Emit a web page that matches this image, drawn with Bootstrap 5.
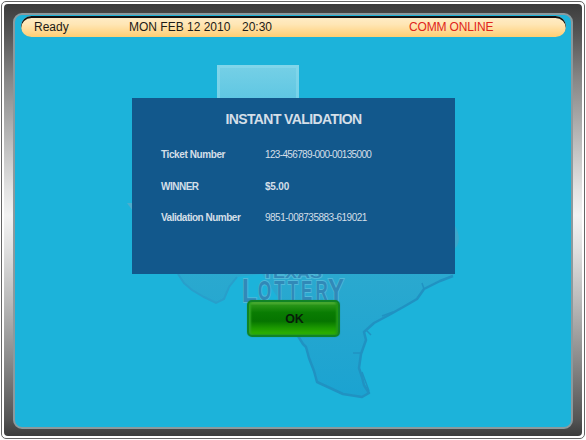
<!DOCTYPE html>
<html lang="en">
<head>
<meta charset="utf-8">
<meta name="viewport" content="width=device-width, initial-scale=1">
<title>Instant Validation</title>
<link href="https://cdn.jsdelivr.net/npm/bootstrap@5.3.0/dist/css/bootstrap.min.css" rel="stylesheet">
<style>
body{width:586px;height:440px;background:#fff;font-family:"Liberation Sans",Arial,sans-serif;line-height:1.15;padding:1px 0 1px 1px}
.shell{width:584px;height:438px;border:1px solid #666;border-radius:5px;background:#fff;padding:2px}
.bezel{height:100%;border-radius:4px;padding:9px;background:linear-gradient(#3c3c3c 0,#565656 7%,#858585 17%,#b5b5b5 30%,#e3e3e3 43%,#f2f2f2 49%,#e2e2e2 56%,#bdbdbd 68%,#8c8c8c 82%,#555 96%,#3c3c3c 100%)}
.screen{height:416px;border:2px solid #8b9a9e;border-radius:9px;background:#1cb3da;isolation:isolate}
.backdrop{left:-15px;top:-15px;z-index:-1}
.status{height:21px;margin:1px 5px 0 6px;border-radius:11px;background:linear-gradient(#ffedc9,#ffe6b5 40%,#ffce73);box-shadow:inset 0 2px 0 #111;font-size:12px;color:#1d1a16}
.status span{padding-top:3px;white-space:pre}
.t-ready{width:95px;margin-left:13px}
.t-date{width:113px}
.t-time{width:167px}
.t-comm{color:#e0251b;letter-spacing:-.15px}
.dialog-box{width:323px;height:176px;margin:61px 0 0 117px;background:#12588c;color:#d4dfe8;padding:13px 29px 0}
.dialog-box h1{font-size:14px;line-height:17px;letter-spacing:-.6px;margin:0 0 18px;font-weight:700}
.line{height:31.5px;font-size:10px;line-height:17px;letter-spacing:-.5px}
.line dt{width:104px}
.line:first-child dt{letter-spacing:-.4px}
.line dd{margin:0}
.line .serial{letter-spacing:-.65px}
.line .prize{letter-spacing:-.2px}
.ok{width:93px;height:37px;margin:26px 0 0 232px;padding:2px 0 0 2px;border:2px solid #118425;border-radius:5px;background:linear-gradient(#65b645 0,#279417 10%,#097c02 32%,#067400 58%,#1b9800 78%,#31b600 100%);color:#071e09;font-size:12.5px;font-weight:700;letter-spacing:-.2px;box-shadow:inset 2px 0 2px #32a523,inset -2px 0 2px #229618,inset 0 -1px 1px #249d16,0 0 1px #16806b}
</style>
</head>
<body class="overflow-hidden">
<main class="shell">
 <div class="bezel">
  <section class="screen position-relative overflow-hidden">
   <svg class="backdrop position-absolute" width="586" height="440" viewBox="0 0 586 440" aria-hidden="true">
    <defs>
     <linearGradient id="pan" x2="0" y2="1"><stop stop-color="#76d0e6"/><stop offset="1" stop-color="#5bc5e2"/></linearGradient>
     <linearGradient id="land" gradientUnits="userSpaceOnUse" x1="0" y1="270" x2="0" y2="395"><stop stop-color="#2ba9cf"/><stop offset="1" stop-color="#1ba3d1"/></linearGradient>
    </defs>
    <path d="M217 65H299V105H217Z" fill="url(#pan)"/>
    <path d="M218.500 104V66.500H297.500V104" fill="none" stroke="#8adbec" stroke-width="3" opacity=".55"/>
    <path d="M127 203L138 218V203Z" fill="#4caece"/>
    <path d="M454 224Q459 232 459 239Q458 247 454 249Z" fill="#3ba8cc"/>
    <path d="M178 272L184 283L192 290L204 297L216 303L224 299L229 287L237 277L262 274L286 310L300 338L306 347L309 358L314 371L317 382L330 388L343 394L362 397L369 393L364 385L362 377L359 368L361 354L366 340L364 332L374 323L389 315L405 306L417 299L424 289L440 281L454 275V265H178Z" fill="url(#land)"/>
    <path d="M178 274L184 283L192 290L204 297L216 303L224 299L229 287L237 277" fill="none" stroke="#289fcb" stroke-width="2"/>
    <path d="M298 336L303 344L306 347L309 358L314 371L317 382L330 388L343 394L362 397L369 393L364 385L362 377L359 368L361 354L366 340L364 332L374 323L389 315L405 306L417 299L424 289L440 281L453 276" fill="none" stroke="#2092c2" stroke-width="2.500" stroke-linejoin="round"/>
    <path d="M353 353H361M362 372L369 391M367 331L371 335M382 316L393 312M422 283L424 289" stroke="#2092c2" stroke-width="1.500" fill="none"/>
    <g font-family="Liberation Sans,Arial,sans-serif" font-weight="700" fill="#3189b8" stroke="#50b9d9" stroke-width="2" paint-order="stroke">
     <text x="262" y="278" font-size="15" textLength="60" lengthAdjust="spacingAndGlyphs">TEXAS</text>
     <text x="242" y="302" font-size="34" textLength="15" lengthAdjust="spacingAndGlyphs">L</text>
     <text transform="translate(258 300) scale(.6 1)" font-size="28" textLength="116" lengthAdjust="spacing">OTTER</text>
     <text x="328" y="301" font-size="32" textLength="16" lengthAdjust="spacingAndGlyphs">Y</text>
    </g>
   </svg>
   <header class="status d-flex align-items-center">
    <span class="t-ready">Ready</span><span class="t-date">MON FEB 12 2010</span><span class="t-time">20:30</span><span class="t-comm">COMM ONLINE</span>
   </header>
   <section class="dialog-box">
    <h1 class="text-center">INSTANT VALIDATION</h1>
    <dl class="mb-0">
     <div class="line d-flex"><dt>Ticket Number</dt><dd class="serial">123-456789-000-00135000</dd></div>
     <div class="line d-flex"><dt>WINNER</dt><dd class="prize fw-bold">$5.00</dd></div>
     <div class="line d-flex"><dt>Validation Number</dt><dd>9851-008735883-619021</dd></div>
    </dl>
   </section>
   <button type="button" class="btn ok d-block">OK</button>
  </section>
 </div>
</main>
<script src="https://cdn.jsdelivr.net/npm/bootstrap@5.3.0/dist/js/bootstrap.bundle.min.js"></script>
</body>
</html>
